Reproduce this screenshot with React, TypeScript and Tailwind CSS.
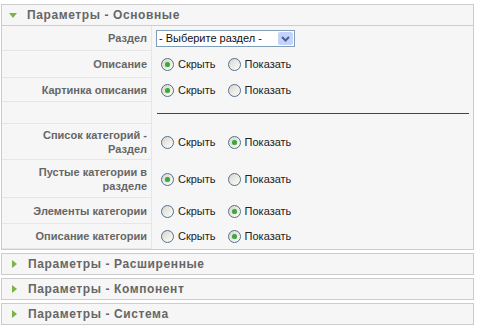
const font = { fontFamily: '"Liberation Sans", Arial, sans-serif' };

const Radio = ({ checked, label }: { checked: boolean; label: string }) => (
  <label className="flex items-center gap-[4px]">
    <span className="relative flex h-[13px] w-[13px] items-center justify-center rounded-full border border-[#55708d] bg-gradient-to-br from-[#d8d6cc] to-white">
      {checked && (
        <span className="h-[5px] w-[5px] rounded-full bg-[#3fa73f] shadow-[0_0_1px_#7cd07c]" />
      )}
    </span>
    <span className="text-[11px] text-[#222]">{label}</span>
  </label>
);

const Toggle = ({ value }: { value: "hide" | "show" }) => (
  <div className="flex items-center gap-[12px] pl-[9px]">
    <Radio checked={value === "hide"} label="Скрыть" />
    <Radio checked={value === "show"} label="Показать" />
  </div>
);

const Row = ({
  label,
  height,
  children,
}: {
  label: React.ReactNode;
  height: string;
  children?: React.ReactNode;
}) => (
  <div className={`flex ${height}`}>
    <div className="flex w-[150px] shrink-0 items-center justify-end border-b border-r border-[#e6e6e6] pr-[4px] text-right text-[11px] font-bold leading-[14px] text-[#666]">
      {label}
    </div>
    <div className="flex flex-1 items-center">{children}</div>
  </div>
);

const Collapsed = ({ title }: { title: string }) => (
  <div className="flex h-[22px] items-center border border-[#cccccc] bg-[#f6f6f6] pl-[10px]">
    <span className="mr-[11px] h-0 w-0 border-y-[4px] border-l-[5px] border-y-transparent border-l-[#7cb342]" />
    <span className="text-[12px] font-bold tracking-[0.6px] text-[#666]">{title}</span>
  </div>
);

export default function App() {
  return (
    <div className="h-[330px] w-[477px] bg-white pl-[1px] pr-[3px] pt-[4px]" style={font}>
      <div className="border border-[#cccccc] bg-[#f6f6f6]">
        <div className="flex h-[21px] items-center border-b border-[#cccccc] pl-[7px]">
          <span className="mr-[10px] h-0 w-0 border-x-[4px] border-t-[5px] border-x-transparent border-t-[#7cb342]" />
          <span className="text-[12px] font-bold tracking-[0.6px] text-[#666]">Параметры - Основные</span>
        </div>

        <Row label="Раздел" height="h-[25px]">
          <div className="ml-[4px] flex h-[17px] w-[139px] items-center border border-[#7f9db9] bg-white">
            <span className="flex-1 pl-[2px] text-[11px] text-[#111]">- Выберите раздел -</span>
            <span className="m-[1px] flex h-[13px] w-[15px] items-center justify-center rounded-[2px] bg-[#c3d3fd]">
              <svg width="9" height="6" viewBox="0 0 9 6">
                <path d="M1 1 L4.5 4.5 L8 1" fill="none" stroke="#4d6185" strokeWidth="2" />
              </svg>
            </span>
          </div>
        </Row>
        <Row label="Описание" height="h-[27px]">
          <Toggle value="hide" />
        </Row>
        <Row label="Картинка описания" height="h-[24px]">
          <Toggle value="hide" />
        </Row>
        <Row label="" height="h-[22px]">
          <div className="ml-[5px] mr-[4px] h-0 flex-1 border-t border-[#444]" />
        </Row>
        <Row
          label={
            <span>
              Список категорий -<br />Раздел
            </span>
          }
          height="h-[36px]"
        >
          <Toggle value="show" />
        </Row>
        <Row
          label={
            <span>
              Пустые категории в<br />разделе
            </span>
          }
          height="h-[38px]"
        >
          <Toggle value="hide" />
        </Row>
        <Row label="Элементы категории" height="h-[26px]">
          <Toggle value="show" />
        </Row>
        <Row label="Описание категории" height="h-[25px]">
          <Toggle value="show" />
        </Row>
      </div>

      <div className="mt-[3px] flex flex-col gap-[3px]">
        <Collapsed title="Параметры - Расширенные" />
        <Collapsed title="Параметры - Компонент" />
        <Collapsed title="Параметры - Система" />
      </div>
    </div>
  );
}
